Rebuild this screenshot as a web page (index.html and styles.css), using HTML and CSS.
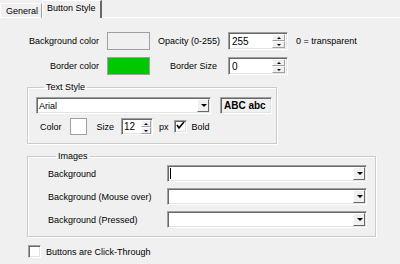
FILE: index.html
```html
<!DOCTYPE html>
<html lang="en">
  <head>
    <meta charset="UTF-8" />
    <title>Button Style</title>
    <link rel="stylesheet" href="styles.css">
  </head>
  <body>
    <div class="tabs">
      <div class="tab">General</div>
      <div class="tab active">Button Style</div>
    </div>

    <div class="page">
      <div class="colors">
        <span class="label">Background color</span>
        <span class="swatch swatch-bg"></span>
        <span class="label">Opacity (0-255)</span>
        <div class="spin">
          <span class="spin-value">255</span>
          <span class="spin-buttons"><i class="up"></i><i class="down"></i></span>
        </div>
        <span class="note">0 = transparent</span>

        <span class="label">Border color</span>
        <span class="swatch swatch-border"></span>
        <span class="label label-size">Border Size</span>
        <div class="spin">
          <span class="spin-value">0</span>
          <span class="spin-buttons"><i class="up"></i><i class="down"></i></span>
        </div>
      </div>

      <fieldset class="group text-style">
        <legend>Text Style</legend>
        <div class="font-row">
          <div class="combo combo-font">
            <span class="combo-value">Arial</span>
            <span class="combo-button"><i></i></span>
          </div>
          <div class="preview">ABC abc</div>
        </div>
        <div class="style-row">
          <span class="color-label">Color</span>
          <span class="swatch swatch-text"></span>
          <span class="size-label">Size</span>
          <div class="spin spin-small">
            <span class="spin-value">12</span>
            <span class="spin-buttons"><i class="up"></i><i class="down"></i></span>
          </div>
          <span class="px">px</span>
          <span class="checkbox">
            <svg width="11" height="11" viewBox="0 0 11 11">
              <polyline points="2,4 4,7 9,1" fill="none" stroke="#000" stroke-width="1.6" />
            </svg>
          </span>
          <span class="bold-label">Bold</span>
        </div>
      </fieldset>

      <fieldset class="group images">
        <legend>Images</legend>
        <div class="image-rows">
          <span>Background</span>
          <div class="combo combo-image">
            <span class="caret"></span>
            <span class="combo-button"><i></i></span>
          </div>
          <span>Background (Mouse over)</span>
          <div class="combo combo-image">
            <span class="combo-value"></span>
            <span class="combo-button"><i></i></span>
          </div>
          <span>Background (Pressed)</span>
          <div class="combo combo-image">
            <span class="combo-value"></span>
            <span class="combo-button"><i></i></span>
          </div>
        </div>
      </fieldset>

      <div class="click-through">
        <span class="checkbox"></span>
        <span>Buttons are Click-Through</span>
      </div>
    </div>
  </body>
</html>
```

FILE: styles.css
```css
body {
  margin: 0;
  width: 400px;
  height: 264px;
  overflow: hidden;
  background-color: #f0f0f0;
  font-family: "Liberation Sans", Arial, sans-serif;
  font-size: 9px;
  color: #000;
  white-space: nowrap;
}

/* tabs */
.tabs {
  display: flex;
  align-items: flex-end;
  height: 17px;
  border-bottom: 1px solid #fff;
}

.tab {
  box-sizing: border-box;
  height: 15px;
  margin-bottom: -1px;
  padding: 0 3px 0 5px;
  line-height: 14px;
  border-top: 1px solid #fff;
  border-left: 1px solid #fff;
  border-right: 1px solid #a0a0a0;
}

.tab.active {
  height: 18px;
  padding: 0 4px;
  line-height: 15px;
  background-color: #f0f0f0;
  border-right: 2px solid #696969;
}

/* page */
.page {
  padding-top: 14px;
}

.colors {
  display: grid;
  grid-template-columns: 99px 43px 62px 60px auto;
  grid-auto-rows: 18px;
  column-gap: 8px;
  row-gap: 7px;
  align-items: center;
}

.label {
  text-align: right;
}

.label-size {
  padding-right: 3px;
}

.colors .swatch {
  height: 18px;
}

.swatch {
  box-sizing: border-box;
  display: block;
  border: 1px solid #a0a0a0;
}

.swatch-bg {
  background-color: #f0f0f0;
}

.swatch-border {
  background-color: #00c800;
}

.swatch-text {
  width: 17px;
  height: 17px;
  background-color: #fff;
}

/* sunken fields */
.spin,
.combo,
.preview {
  box-sizing: border-box;
  border: 1px solid;
  border-color: #a0a0a0 #fff #fff #a0a0a0;
  box-shadow: inset 1px 1px 0 #696969, inset -1px -1px 0 #e3e3e3;
}

.spin {
  display: flex;
  align-items: center;
  height: 18px;
  background-color: #fff;
}

.spin-value {
  flex: 1;
  padding-left: 3px;
  font-size: 10px;
}

.spin-buttons {
  display: flex;
  flex-direction: column;
  width: 13px;
  height: 14px;
  margin-right: 2px;
}

.spin-buttons i {
  flex: 1;
  position: relative;
  background-color: #f0f0f0;
  border: 1px solid;
  border-color: #fff #a0a0a0 #a0a0a0 #fff;
}

.spin-buttons i::after {
  content: "";
  position: absolute;
  left: 4px;
  top: 2px;
  border-left: 2px solid transparent;
  border-right: 2px solid transparent;
}

.spin-buttons .up::after {
  border-bottom: 2px solid #000;
}

.spin-buttons .down::after {
  border-top: 2px solid #000;
}

.spin-small {
  width: 32px;
  height: 17px;
}

.spin-small .spin-value {
  padding-left: 2px;
}

.spin-small .spin-buttons {
  width: 10px;
  margin-right: 1px;
}

.spin-small .spin-buttons i::after {
  left: 2px;
}

/* group boxes */
.group {
  margin: 0 0 0 27px;
  padding: 0;
  border: 1px solid #cbcbcb;
  box-shadow: inset 1px 1px 0 #fff, 1px 1px 0 #fff;
}

.group legend {
  margin-left: 8px;
  padding: 0 2px;
  line-height: 11px;
}

.text-style {
  width: 250px;
  margin-top: 7px;
  box-sizing: border-box;
  padding: 4px 0 8px 8px;
}

.font-row {
  display: flex;
  gap: 9px;
}

.combo {
  display: flex;
  align-items: center;
  height: 17px;
  background-color: #fff;
}

.combo-font {
  width: 175px;
}

.combo-value {
  flex: 1;
  padding-left: 2px;
}

.combo-button {
  position: relative;
  width: 12px;
  height: 13px;
  margin-right: 1px;
  box-sizing: border-box;
  background-color: #f0f0f0;
  border: 1px solid;
  border-color: #fff #696969 #696969 #fff;
}

.combo-button i {
  position: absolute;
  left: 3px;
  top: 4px;
  border-left: 3px solid transparent;
  border-right: 3px solid transparent;
  border-top: 3px solid #000;
}

.preview {
  width: 52px;
  height: 17px;
  padding-left: 3px;
  line-height: 15px;
  font-size: 10px;
  font-weight: bold;
  background-color: #f0f0f0;
}

.style-row {
  display: flex;
  align-items: center;
  height: 17px;
  margin-top: 4px;
}

.color-label {
  margin-left: 4px;
  margin-right: 8px;
}

.size-label {
  margin-left: 10px;
  margin-right: 7px;
}

.px {
  margin-left: 6px;
  margin-right: 5px;
}

.checkbox {
  box-sizing: border-box;
  display: block;
  width: 13px;
  height: 13px;
  background-color: #fff;
  border: 1px solid;
  border-color: #a0a0a0 #fff #fff #a0a0a0;
  box-shadow: inset 1px 1px 0 #696969, inset -1px -1px 0 #e3e3e3;
}

.checkbox svg {
  display: block;
}

.bold-label {
  margin-left: 5px;
}

.images {
  width: 349px;
  margin-top: 7px;
  box-sizing: border-box;
  padding: 3px 8px 8px 20px;
}

.image-rows {
  display: grid;
  grid-template-columns: 1fr 200px;
  grid-auto-rows: 17px;
  row-gap: 6px;
  align-items: center;
}

.caret {
  flex: 1;
  height: 11px;
  margin-left: 2px;
  border-left: 1px solid #000;
}

.click-through {
  display: flex;
  align-items: center;
  gap: 5px;
  margin: 8px 0 0 28px;
}
```
